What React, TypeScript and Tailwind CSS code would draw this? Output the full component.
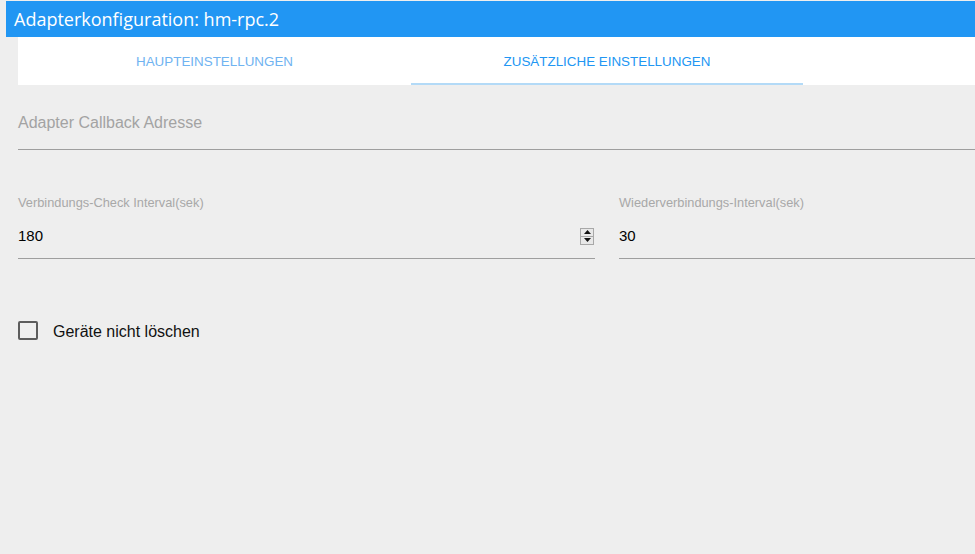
import React from "react";

function Spinner() {
  return (
    <div className="flex flex-col w-[14px] h-[17px] border-x border-[#a8a8a8] bg-[#e8e8e8]">
      <div className="flex-1 flex items-center justify-center border-y border-[#a8a8a8]">
        <svg width="7" height="4" viewBox="0 0 7 4"><path d="M3.5 0 L7 4 L0 4 Z" fill="#111" /></svg>
      </div>
      <div className="flex-1 flex items-center justify-center border-b border-[#a8a8a8]">
        <svg width="7" height="4" viewBox="0 0 7 4"><path d="M0 0 L7 0 L3.5 4 Z" fill="#111" /></svg>
      </div>
    </div>
  );
}

export default function App() {
  return (
    <div className="w-[975px] h-[554px] bg-[#eeeeee] overflow-hidden pt-[1px]" style={{ fontFamily: '"Liberation Sans", Arial, sans-serif' }}>
      <div className="ml-[6px] h-[36px] bg-[#2196f3] flex items-center pl-[8px]">
        <span className="text-white text-[18px] leading-none" style={{ fontFamily: '"Open Sans", "Noto Sans", sans-serif' }}>
          Adapterkonfiguration: hm-rpc.2
        </span>
      </div>
      <div className="pl-[18px]">
        <div className="h-[48px] bg-white flex">
          <div className="w-[393px] flex items-center justify-center text-[13.4px] text-[#6fb3f1] pt-[2px]">HAUPTEINSTELLUNGEN</div>
          <div className="w-[392px] flex flex-col">
            <div className="flex-1 flex items-center justify-center text-[13.4px] text-[#2196f3] pt-[4px]">ZUSÄTZLICHE EINSTELLUNGEN</div>
            <div className="h-[2px] bg-[#b3daf7]" />
          </div>
        </div>

        <div className="pt-[29px] pb-[17px] border-b border-[#9e9e9e]">
          <div className="text-[16px] leading-[18px] text-[#a3a3a3]">Adapter Callback Adresse</div>
        </div>

        <div className="mt-[46px] flex gap-[24px]">
          <div className="w-[577px]">
            <div className="text-[12.8px] leading-[14px] text-[#a8a8a8]">Verbindungs-Check Interval(sek)</div>
            <div className="mt-[17px] pb-[13px] border-b border-[#9e9e9e] flex items-center justify-between pr-[1px]">
              <span className="text-[15px] leading-[18px] text-black">180</span>
              <Spinner />
            </div>
          </div>
          <div className="flex-1">
            <div className="text-[12.8px] leading-[14px] text-[#a8a8a8]">Wiederverbindungs-Interval(sek)</div>
            <div className="mt-[17px] pb-[13px] border-b border-[#9e9e9e] flex items-center">
              <span className="text-[15px] leading-[18px] text-black">30</span>
            </div>
          </div>
        </div>

        <div className="mt-[61px] flex items-center">
          <div className="w-[20px] h-[19px] border-2 border-[#5c5c5c] rounded-[2px]" />
          <span className="ml-[15px] text-[16px] leading-[18px] text-[#111] pt-[3px]">Geräte nicht löschen</span>
        </div>
      </div>
    </div>
  );
}
